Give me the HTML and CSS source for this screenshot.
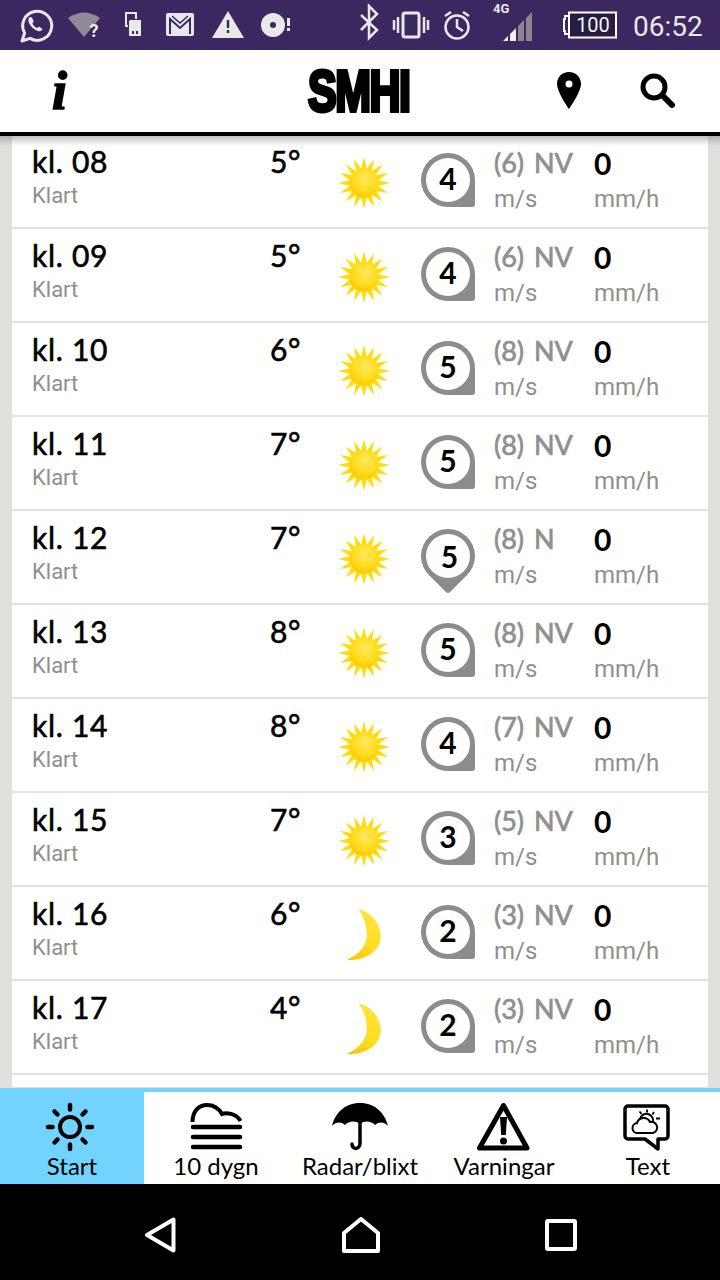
FILE: index.html
```html
<!DOCTYPE html>
<html lang="en">
<head>
    <meta charset="UTF-8">
    <meta name="viewport" content="width=device-width, initial-scale=1.0">
    <title>SMHI</title>
    <link rel="stylesheet" href="styles.css">
</head>
<body>
    <svg class="defs" width="0" height="0">
        <defs>
            <radialGradient id="sun-core" cx="0.55" cy="0.35" r="0.7">
                <stop offset="0" stop-color="#ffe95e"/>
                <stop offset="0.6" stop-color="#ffdc1e"/>
                <stop offset="1" stop-color="#ffc400"/>
            </radialGradient>
            <linearGradient id="moon-fill" x1="0.7" y1="0" x2="0.2" y2="1">
                <stop offset="0" stop-color="#ffe43d"/>
                <stop offset="0.6" stop-color="#ffdd20"/>
                <stop offset="1" stop-color="#ffc400"/>
            </linearGradient>
            <symbol id="sun" viewBox="-27 -27 54 54">
                <polygon fill="#ffdc0a" points="27,0 14.7,2.9 24.9,10.3 12.5,8.3 19.1,19.1 8.3,12.5 10.3,24.9 2.9,14.7 0,27 -2.9,14.7 -10.3,24.9 -8.3,12.5 -19.1,19.1 -12.5,8.3 -24.9,10.3 -14.7,2.9 -27,0 -14.7,-2.9 -24.9,-10.3 -12.5,-8.3 -19.1,-19.1 -8.3,-12.5 -10.3,-24.9 -2.9,-14.7 0,-27 2.9,-14.7 10.3,-24.9 8.3,-12.5 19.1,-19.1 12.5,-8.3 24.9,-10.3 14.7,-2.9"/>
                <circle r="15" fill="url(#sun-core)"/>
            </symbol>
            <symbol id="moon" viewBox="-27 -29 54 58">
                <path fill="url(#moon-fill)" d="M-6,-28 C11,-23 18,-10 18,2 C18,15 5,28 -19,27 C-5,21 3,11 3,0 C3,-10 0,-20 -6,-28Z"/>
            </symbol>
        </defs>
    </svg>

    <div class="status">
        <svg class="status-left" width="300" height="50" viewBox="0 0 300 50">
            <!-- whatsapp -->
            <path d="M22 41 l2.6-8 a14.5 14.5 0 1 1 5.4 5.4 z" fill="none" stroke="#e8e8e8" stroke-width="3" stroke-linejoin="round"/>
            <path d="M30 17 c-1.5 1-2 2.500-1.500 4.500 c1 4 5.500 8.500 9.500 9.500 c2 .5 3.500 0 4.500-2 l-3.700-2.500 -1.800 1.500 c-2-.8-3.800-2.700-4.700-4.700 l1.500-1.600 -1.800-4.200z" fill="#e8e8e8"/>
            <!-- wifi -->
            <path d="M68 18 Q84 7 100 18 L84 37z" fill="#8e8a96"/>
            <text class="status-q" x="94" y="37">?</text>
            <!-- sim -->
            <path d="M128 26 h-2 V13 h10 v6" fill="none" stroke="#e8e8e8" stroke-width="2"/>
            <path d="M130 20 h11 v16 h-12 v-15z" fill="#e8e8e8"/>
            <path d="M132 31 h2 v3 h-2z M136 31 h2 v3 h-2z" fill="#3b2861"/>
            <!-- mail -->
            <rect x="166" y="13" width="28" height="23" rx="2" fill="#e8e8e8"/>
            <path d="M170 34 V19 L180 28 L190 19 V34" fill="none" stroke="#3b2861" stroke-width="2"/>
            <path d="M172 16 L180 23 L188 16" fill="none" stroke="#3b2861" stroke-width="1.500"/>
            <!-- warning -->
            <path d="M212 38 L228 11 L244 38z" fill="#e8e8e8"/>
            <path d="M226.800 20 h2.400 v8 h-2.400z M226.800 30 h2.400 v3 h-2.400z" fill="#3b2861"/>
            <!-- disc -->
            <circle cx="273" cy="25" r="12" fill="#e8e8e8"/>
            <circle cx="273" cy="25" r="3" fill="#3b2861"/>
            <path d="M287 18 h3 v8 h-3z M287 28 h3 v3 h-3z" fill="#e8e8e8"/>
        </svg>
        <svg class="status-right" width="275" height="50" viewBox="350 0 275 50">
            <!-- bluetooth -->
            <path d="M361 15 L377 30 L369 38 V6 L377 14 L361 30" fill="none" stroke="#e8e8e8" stroke-width="2.500"/>
            <!-- vibrate -->
            <rect x="403" y="13" width="16" height="24" rx="2" fill="none" stroke="#e8e8e8" stroke-width="3"/>
            <path d="M398 17 V33 M394 20 V30 M424 17 V33 M428 20 V30" fill="none" stroke="#e8e8e8" stroke-width="2.500"/>
            <!-- alarm -->
            <circle cx="457" cy="27" r="11.500" fill="none" stroke="#e8e8e8" stroke-width="2.500"/>
            <path d="M457 19 V27 L463 31 M445 16 L451 12 M463 12 L469 16" fill="none" stroke="#e8e8e8" stroke-width="2.500"/>
            <!-- signal -->
            <text class="status-4g" x="493" y="13">4G</text>
            <path d="M503 41 L508 36 V41z M510 41 V34 L516 28 V41z" fill="#f0f0f0"/>
            <path d="M518 41 V26 L524 20 V41z M526 41 V18 L532 12 V41z" fill="#8b8494"/>
            <!-- battery -->
            <rect x="569" y="12.500" width="47" height="25" fill="#261b40" stroke="#fff" stroke-width="2"/>
            <path d="M569 16 h-4 v3 h-1 v12 h1 v3 h4" fill="none" stroke="#fff" stroke-width="2"/>
            <text class="status-batt" x="593" y="32" text-anchor="middle">100</text>
        </svg>
        <span class="clock">06:52</span>
    </div>

    <header class="topbar">
        <div class="topbar-left"><span class="info">i</span></div>
        <div class="logo">SMHI</div>
        <div class="topbar-right">
            <svg width="26" height="38" viewBox="0 0 26 38"><path d="M13 0 C5.800 0 1 5.500 1 12 C1 20 13 37 13 37 C13 37 25 20 25 12 C25 5.500 20 0 13 0Z M13 8.500 a3.500 3.500 0 1 1 0 7 a3.500 3.500 0 1 1 0-7z" fill-rule="evenodd"/></svg>
            <svg width="36" height="36" viewBox="0 0 36 36"><circle cx="14" cy="14" r="11" fill="none" stroke="#000" stroke-width="5"/><path d="M23 23 L32 32" stroke="#000" stroke-width="6" stroke-linecap="round"/></svg>
        </div>
    </header>

    <main class="main">
        <div class="list">
            <div class="row">
                <div><div class="time">kl. 08</div><div class="cond">Klart</div></div>
                <div class="temp">5°</div>
                <svg class="wx"><use href="#sun"/></svg>
                <div class="wind"><div class="wind-face">4</div></div>
                <div><div class="gust">(6) NV</div><div class="unit">m/s</div></div>
                <div><div class="rain">0</div><div class="unit">mm/h</div></div>
            </div>
            <div class="row">
                <div><div class="time">kl. 09</div><div class="cond">Klart</div></div>
                <div class="temp">5°</div>
                <svg class="wx"><use href="#sun"/></svg>
                <div class="wind"><div class="wind-face">4</div></div>
                <div><div class="gust">(6) NV</div><div class="unit">m/s</div></div>
                <div><div class="rain">0</div><div class="unit">mm/h</div></div>
            </div>
            <div class="row">
                <div><div class="time">kl. 10</div><div class="cond">Klart</div></div>
                <div class="temp">6°</div>
                <svg class="wx"><use href="#sun"/></svg>
                <div class="wind"><div class="wind-face">5</div></div>
                <div><div class="gust">(8) NV</div><div class="unit">m/s</div></div>
                <div><div class="rain">0</div><div class="unit">mm/h</div></div>
            </div>
            <div class="row">
                <div><div class="time">kl. 11</div><div class="cond">Klart</div></div>
                <div class="temp">7°</div>
                <svg class="wx"><use href="#sun"/></svg>
                <div class="wind"><div class="wind-face">5</div></div>
                <div><div class="gust">(8) NV</div><div class="unit">m/s</div></div>
                <div><div class="rain">0</div><div class="unit">mm/h</div></div>
            </div>
            <div class="row">
                <div><div class="time">kl. 12</div><div class="cond">Klart</div></div>
                <div class="temp">7°</div>
                <svg class="wx"><use href="#sun"/></svg>
                <div class="wind wind-n"><div class="wind-face">5</div></div>
                <div><div class="gust">(8) N</div><div class="unit">m/s</div></div>
                <div><div class="rain">0</div><div class="unit">mm/h</div></div>
            </div>
            <div class="row">
                <div><div class="time">kl. 13</div><div class="cond">Klart</div></div>
                <div class="temp">8°</div>
                <svg class="wx"><use href="#sun"/></svg>
                <div class="wind"><div class="wind-face">5</div></div>
                <div><div class="gust">(8) NV</div><div class="unit">m/s</div></div>
                <div><div class="rain">0</div><div class="unit">mm/h</div></div>
            </div>
            <div class="row">
                <div><div class="time">kl. 14</div><div class="cond">Klart</div></div>
                <div class="temp">8°</div>
                <svg class="wx"><use href="#sun"/></svg>
                <div class="wind"><div class="wind-face">4</div></div>
                <div><div class="gust">(7) NV</div><div class="unit">m/s</div></div>
                <div><div class="rain">0</div><div class="unit">mm/h</div></div>
            </div>
            <div class="row">
                <div><div class="time">kl. 15</div><div class="cond">Klart</div></div>
                <div class="temp">7°</div>
                <svg class="wx"><use href="#sun"/></svg>
                <div class="wind"><div class="wind-face">3</div></div>
                <div><div class="gust">(5) NV</div><div class="unit">m/s</div></div>
                <div><div class="rain">0</div><div class="unit">mm/h</div></div>
            </div>
            <div class="row">
                <div><div class="time">kl. 16</div><div class="cond">Klart</div></div>
                <div class="temp">6°</div>
                <svg class="wx"><use href="#moon"/></svg>
                <div class="wind"><div class="wind-face">2</div></div>
                <div><div class="gust">(3) NV</div><div class="unit">m/s</div></div>
                <div><div class="rain">0</div><div class="unit">mm/h</div></div>
            </div>
            <div class="row">
                <div><div class="time">kl. 17</div><div class="cond">Klart</div></div>
                <div class="temp">4°</div>
                <svg class="wx"><use href="#moon"/></svg>
                <div class="wind"><div class="wind-face">2</div></div>
                <div><div class="gust">(3) NV</div><div class="unit">m/s</div></div>
                <div><div class="rain">0</div><div class="unit">mm/h</div></div>
            </div>
        </div>
    </main>

    <nav class="tabs">
        <div class="tab tab-active">
            <svg class="tab-icon" viewBox="0 0 60 52">
                <circle cx="28" cy="27" r="10" fill="none" stroke="#000" stroke-width="4"/>
                <path d="M28 5 V9.500 M28 44.500 V49 M6 27 H10.500 M45.500 27 H50 M12.500 11.500 L15.500 14.500 M40.500 39.500 L43.500 42.500 M12.500 42.500 L15.500 39.500 M40.500 14.500 L43.500 11.500" stroke="#000" stroke-width="4.500" stroke-linecap="round"/>
            </svg>
            <span>Start</span>
        </div>
        <div class="tab">
            <svg class="tab-icon" viewBox="0 0 60 52">
                <path d="M6.500 22 C6.500 11 13 5 21 5 C28 5 33 9 36 14 C40 12.500 50 13 54.500 21" fill="none" stroke="#000" stroke-width="4"/>
                <path d="M7 27 H54 M7 37 H54 M7 47 H54" stroke="#000" stroke-width="4.500" stroke-linecap="round"/>
            </svg>
            <span>10 dygn</span>
        </div>
        <div class="tab">
            <svg class="tab-icon" viewBox="0 0 60 52">
                <path d="M30 3 C15 3 5 13 2 26 C5 22 11 21 15 25 C18 21 26 20 30 24 C34 20 42 21 45 25 C49 21 55 22 58 26 C55 13 45 3 30 3Z"/>
                <path d="M30 20 V43 C30 50 22 50 22 44" fill="none" stroke="#000" stroke-width="3.500" stroke-linecap="round"/>
            </svg>
            <span>Radar/blixt</span>
        </div>
        <div class="tab">
            <svg class="tab-icon" viewBox="0 0 60 52">
                <path d="M29.500 5.500 L5.500 48 H53z" fill="none" stroke="#000" stroke-width="5" stroke-linejoin="round"/>
                <path d="M26 17 h7 l-1.200 18 h-4.600z"/>
                <circle cx="29.500" cy="41" r="3.500"/>
            </svg>
            <span>Varningar</span>
        </div>
        <div class="tab">
            <svg class="tab-icon" viewBox="0 0 60 52">
                <path d="M10 6 H47 a3 3 0 0 1 3 3 V36 a3 3 0 0 1 -3 3 H40 V49 L27 39 H10 a3 3 0 0 1 -3-3 V9 a3 3 0 0 1 3-3z" fill="none" stroke="#000" stroke-width="3.500" stroke-linejoin="round"/>
                <path d="M20 33 a5 5 0 0 1 -1 -10 a7 7 0 0 1 13 -1 a5.500 5.500 0 0 1 3 11 z" fill="none" stroke="#000" stroke-width="2"/>
                <path d="M22 19 a6.500 6.500 0 0 1 13 3" fill="none" stroke="#000" stroke-width="2"/>
                <path d="M29 9.500 V12.500 M38 18.500 H42 M36 12 L34.500 14.500 M21.500 11.500 L23.500 14" stroke="#000" stroke-width="1.800"/>
            </svg>
            <span>Text</span>
        </div>
    </nav>

    <div class="navbar">
        <svg width="32" height="36" viewBox="0 0 32 36"><path d="M3 18 L29.500 2.500 V33.500z" fill="none" stroke="#fff" stroke-width="4" stroke-linejoin="round"/></svg>
        <svg width="38" height="36" viewBox="0 0 38 36"><path d="M2 16 L19 2 L36 16 V34 H2z" fill="none" stroke="#fff" stroke-width="4" stroke-linejoin="round"/></svg>
        <svg width="32" height="32" viewBox="0 0 32 32"><rect x="2" y="2" width="28" height="28" rx="1" fill="none" stroke="#fff" stroke-width="4"/></svg>
    </div>
</body>
</html>
```

FILE: styles.css
```css
body, html {
    margin: 0;
    padding: 0;
    width: 720px;
    height: 1280px;
    overflow: hidden;
    font-family: 'Lato', sans-serif;
    background-color: #000;
}

body {
    display: flex;
    flex-direction: column;
}

.defs {
    display: block;
    flex: none;
}

/* status bar */
.status {
    height: 50px;
    flex: none;
    display: flex;
    align-items: center;
    background-color: #3b2861;
}

.status-right {
    margin-left: 50px;
}

.status-q {
    font-family: 'Roboto', sans-serif;
    font-size: 18px;
    font-weight: 700;
    fill: #f0f0f0;
    text-anchor: middle;
}

.status-4g {
    font-family: 'Roboto', sans-serif;
    font-size: 13px;
    font-weight: 700;
    fill: #e8e8e8;
}

.status-batt {
    font-family: 'Roboto', sans-serif;
    font-size: 20px;
    fill: #f4f4f4;
}

.clock {
    margin-left: 8px;
    padding-top: 3px;
    font-family: 'Roboto', sans-serif;
    font-size: 28px;
    color: #e8e8e8;
}

/* top bar */
.topbar {
    height: 82px;
    flex: none;
    display: grid;
    grid-template-columns: 1fr auto 1fr;
    align-items: center;
    background-color: #fff;
    border-bottom: 4px solid #000;
}

.topbar-left {
    padding-left: 52px;
}

.info {
    font-family: 'Liberation Serif', serif;
    font-style: italic;
    font-weight: 700;
    font-size: 54px;
    -webkit-text-stroke: 1.5px #000;
}

.logo {
    width: 105px;
    font-family: 'Liberation Sans', sans-serif;
    font-weight: 700;
    font-size: 58px;
    line-height: 42px;
    letter-spacing: -2px;
    -webkit-text-stroke: 4px #000;
    white-space: nowrap;
    transform: scaleX(0.74);
    transform-origin: left center;
}

.topbar-right {
    display: flex;
    justify-content: flex-end;
    align-items: center;
    gap: 58px;
    padding-right: 44px;
}

/* hour list */
.main {
    position: relative;
    flex: 1;
    overflow: hidden;
    padding: 0 12px;
    background-color: #e0dfdc;
}

.main::before {
    content: "";
    position: absolute;
    top: 0;
    left: 0;
    right: 0;
    height: 10px;
    background: linear-gradient(rgba(120,120,120,0.45), rgba(120,120,120,0));
}

.list {
    height: 100%;
    margin-top: -1px;
    background-color: #fff;
}

.row {
    height: 92px;
    box-sizing: content-box;
    display: grid;
    grid-template-columns: 238px 68px 83px 73px 100px 1fr;
    padding-left: 20px;
    border-bottom: 2px solid #e0e0e0;
}

.time {
    margin-top: 8px;
    font-size: 30px;
    line-height: 36px;
    color: #000;
    letter-spacing: 0.7px;
    -webkit-text-stroke: 0.6px #000;
}

.cond {
    margin-top: 4px;
    font-family: 'Roboto', sans-serif;
    font-size: 22px;
    line-height: 26px;
    color: #8f8f8f;
}

.temp {
    margin-top: 8px;
    font-size: 30px;
    line-height: 36px;
    color: #000;
    letter-spacing: 0.7px;
    -webkit-text-stroke: 0.6px #000;
}

.wx {
    width: 52px;
    height: 54px;
    margin-top: 21px;
    overflow: visible;
}

.wind {
    width: 54px;
    height: 54px;
    margin-top: 18px;
    display: flex;
    align-items: center;
    justify-content: center;
    background-color: #8c8c8c;
    border-radius: 50% 50% 3px 50%;
}

.wind-face {
    box-sizing: border-box;
    width: 44px;
    height: 44px;
    padding-bottom: 4px;
    display: flex;
    align-items: center;
    justify-content: center;
    background-color: #fff;
    border-radius: 50%;
    font-size: 30px;
    font-weight: 700;
    color: #000;
}

.wind-n {
    transform: rotate(45deg);
}

.wind-n .wind-face {
    padding-bottom: 0;
    padding-left: 3px;
    padding-top: 0;
    transform: rotate(-45deg);
}

.gust {
    margin-top: 10px;
    font-size: 27px;
    line-height: 36px;
    word-spacing: 3px;
    color: #8f8f8f;
    -webkit-text-stroke: 0.7px #8f8f8f;
    white-space: nowrap;
}

.rain {
    margin-top: 10px;
    font-size: 30px;
    line-height: 36px;
    font-weight: 700;
    color: #000;
}

.unit {
    margin-top: 3px;
    font-family: 'Roboto', sans-serif;
    font-size: 24px;
    line-height: 30px;
    color: #8f8f8f;
}

/* bottom tabs */
.tabs {
    height: 92px;
    flex: none;
    display: flex;
    background-color: #fff;
    border-top: 4px solid #72d3ff;
}

.tab {
    width: 144px;
    display: flex;
    flex-direction: column;
    align-items: center;
    font-size: 24px;
    line-height: 28px;
    color: #000;
    white-space: nowrap;
}

.tab-active {
    background-color: #72d3ff;
}

.tab-icon {
    width: 60px;
    height: 52px;
    margin-top: 8px;
    flex: none;
}

/* android nav */
.navbar {
    box-sizing: border-box;
    height: 96px;
    flex: none;
    display: flex;
    align-items: center;
    justify-content: space-between;
    padding: 6px 143px 0 144px;
    background-color: #000;
}
```
